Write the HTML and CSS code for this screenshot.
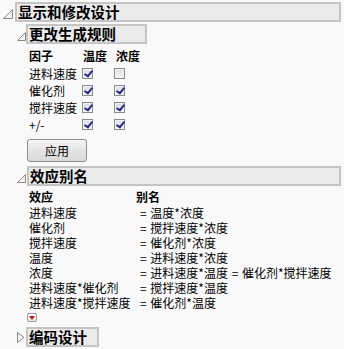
FILE: index.html
```html
<!DOCTYPE html>
<html lang="zh">
<head>
<meta charset="utf-8">
<title>显示和修改设计</title>
<link rel="stylesheet" href="styles.css">
</head>
<body>
<div class="page">
  <div class="outline">
    <div class="ohead">
      <svg class="tri tri-l1" viewBox="0 0 10 10" width="10" height="10"><path d="M0.5 9.5 L9.5 9.5 L9.5 0.5 Z" fill="#f2f2f2" stroke="#8a8a8a" stroke-width="1"/></svg>
      <div class="otitle fill">显示和修改设计</div>
    </div>
    <div class="obody l1body">

      <div class="outline">
        <div class="ohead">
          <svg class="tri" viewBox="0 0 9 9" width="9" height="9"><path d="M0.5 8.5 L8.5 8.5 L8.5 0.5 Z" fill="#f2f2f2" stroke="#8a8a8a" stroke-width="1"/></svg>
          <div class="otitle w-rules">更改生成规则</div>
        </div>
        <div class="obody content">
          <div class="factors">
            <div class="th">因子</div><div class="th c2">温度</div><div class="th c3">浓度</div>

            <div class="td">进料速度</div>
            <div class="td"><span class="cb on"></span></div>
            <div class="td"><span class="cb"></span></div>

            <div class="td">催化剂</div>
            <div class="td"><span class="cb on"></span></div>
            <div class="td"><span class="cb on"></span></div>

            <div class="td">搅拌速度</div>
            <div class="td"><span class="cb on"></span></div>
            <div class="td"><span class="cb on"></span></div>

            <div class="td">+/-</div>
            <div class="td"><span class="cb on"></span></div>
            <div class="td"><span class="cb on"></span></div>
          </div>
          <button class="btn" type="button">应用</button>
        </div>
      </div>

      <div class="outline sec">
        <div class="ohead">
          <svg class="tri" viewBox="0 0 9 9" width="9" height="9"><path d="M0.5 8.5 L8.5 8.5 L8.5 0.5 Z" fill="#f2f2f2" stroke="#8a8a8a" stroke-width="1"/></svg>
          <div class="otitle fill">效应别名</div>
        </div>
        <div class="obody content">
          <div class="aliases">
            <div class="ah">效应</div><div class="ah">别名</div>
            <div class="ad">进料速度</div><div class="av">= 温度*浓度</div>
            <div class="ad">催化剂</div><div class="av">= 搅拌速度*浓度</div>
            <div class="ad">搅拌速度</div><div class="av">= 催化剂*浓度</div>
            <div class="ad">温度</div><div class="av">= 进料速度*浓度</div>
            <div class="ad">浓度</div><div class="av">= 进料速度*温度 = 催化剂*搅拌速度</div>
            <div class="ad">进料速度*催化剂</div><div class="av">= 搅拌速度*温度</div>
            <div class="ad">进料速度*搅拌速度</div><div class="av">= 催化剂*温度</div>
          </div>
          <div class="menubtn"><svg viewBox="0 0 6 4" width="6" height="4"><path d="M0 0 L6 0 L3 4 Z" fill="#d0101a"/></svg></div>
        </div>
      </div>

      <div class="outline sec2">
        <div class="ohead">
          <svg class="tri" viewBox="0 0 8 11" width="8" height="11"><path d="M0.5 0.5 L7 5.5 L0.5 10.5 Z" fill="#f2f2f2" stroke="#8a8a8a" stroke-width="1"/></svg>
          <div class="otitle w-code">编码设计</div>
        </div>
      </div>

    </div>
  </div>
</div>
</body>
</html>
```

FILE: styles.css
```css
html, body {
  margin: 0;
  padding: 0;
  background: #f9f9f9;
}
body {
  font-family: "Noto Sans CJK SC", "Noto Sans", sans-serif;
  font-size: 12px;
  color: #000;
}
.page {
  padding: 2px 3px 0 3px;
}
.outline {
  display: flex;
  flex-direction: column;
}
.ohead {
  display: flex;
  align-items: center;
  height: 20px;
}
.tri {
  flex: none;
  display: block;
  margin-top: 4px;
}
.tri-l1 {
  margin-right: 2px;
}
.otitle {
  box-sizing: border-box;
  height: 20px;
  background: #ebebeb;
  border: 2px solid #c4c4c4;
  font-weight: bold;
  font-size: 14.5px;
  line-height: 16px;
  padding-left: 1px;
  white-space: nowrap;
}
.otitle.fill {
  flex: 1;
}
.w-rules {
  width: 121px;
}
.w-code {
  width: 73px;
}
.l1body {
  padding-left: 14px;
  margin-top: 2px;
}
.content {
  padding-left: 12px;
}
.factors {
  display: grid;
  grid-template-columns: 52px 32px auto;
  grid-template-rows: 19px repeat(4, 17px);
  margin-top: 2px;
  align-items: center;
}
.th {
  font-weight: bold;
  line-height: 16px;
}
.th.c2 { padding-left: 2px; }
.th.c3 { padding-left: 3px; }
.td {
  line-height: 16px;
  display: flex;
  align-items: center;
}
.cb {
  box-sizing: border-box;
  display: block;
  width: 11px;
  height: 11px;
  border: 1px solid #8a8a8a;
  background: linear-gradient(#dcdcdc, #f6f6f6);
  box-shadow: inset 0 0 0 1px #f4f4f4;
  position: relative;
  margin-left: 1px;
}
.cb.on::after {
  content: "";
  position: absolute;
  left: 3px;
  top: 0px;
  width: 3px;
  height: 6px;
  border-right: 2px solid #2b2b8e;
  border-bottom: 2px solid #2b2b8e;
  transform: rotate(40deg) skewY(-8deg);
}
.btn {
  box-sizing: border-box;
  margin: 6px 0 0 -2px;
  width: 60px;
  height: 23px;
  border: 1px solid #8e8e8e;
  border-radius: 3px;
  background: linear-gradient(#f6f6f6, #e2e2e2 55%, #d9d9d9);
  font-family: "Noto Sans CJK SC", "Noto Sans", sans-serif;
  font-size: 12px;
  color: #000;
  padding: 0;
  line-height: 20px;
}
.sec {
  margin-top: 4px;
}
.sec .otitle.fill {
  margin-left: 1px;
}
.aliases {
  display: grid;
  grid-template-columns: 107px auto;
  grid-template-rows: 16px repeat(7, 15px);
  margin-top: 3px;
  align-items: center;
  white-space: nowrap;
}
.ah {
  font-weight: bold;
  line-height: 16px;
}
.ad, .av {
  line-height: 15px;
}
.av {
  padding-left: 4px;
  word-spacing: 1px;
}
.menubtn {
  box-sizing: border-box;
  width: 10px;
  height: 9px;
  margin: 3px 0 0 -2px;
  border: 1px solid #9a9a9a;
  border-radius: 2px;
  background: linear-gradient(#ffffff, #e8e8e8);
  display: flex;
  align-items: center;
  justify-content: center;
}
.menubtn svg {
  display: block;
}
.sec2 {
  margin-top: 5px;
}
.sec2 .tri {
  margin-top: 0;
  margin-right: 1px;
}
```
